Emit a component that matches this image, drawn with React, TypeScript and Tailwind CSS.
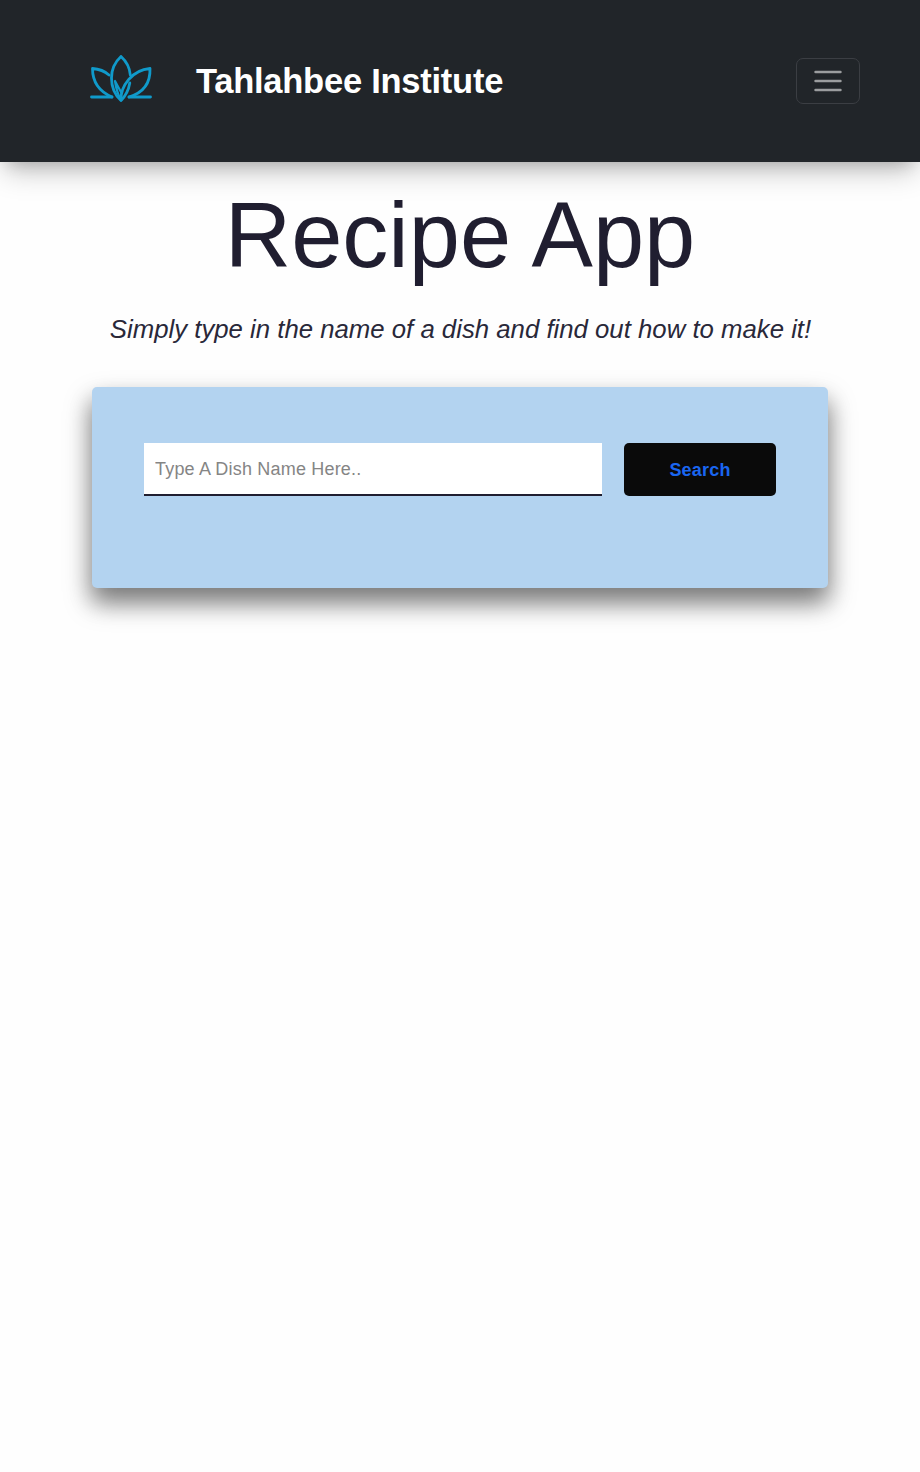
export default function App() {
  return (
    <div className="min-h-[1472px] bg-[#fefefe] font-['Liberation_Sans',Arial,sans-serif] text-[#201e30]">
      <header className="flex h-[162px] items-center bg-[#212529] pr-[60px] pl-[89px] shadow-[0_13px_27px_-5px_rgba(0,0,0,0.25),0_8px_16px_-8px_rgba(0,0,0,0.2)]">
        <svg viewBox="0 0 64 50" className="mt-[-6px] h-[50px] w-[64px]" fill="none" stroke="#109aca" strokeWidth="2.8" strokeLinejoin="round" strokeLinecap="round">
          <path d="M32 3.500C26 9 22.500 16.500 22.500 25C22.500 35 27 43 32 47.500C36 43.500 39.500 37.500 40.800 30M32 3.500C37.500 8.500 40.800 15 41.300 22" />
          <path d="M32 47C31.500 33 43 17 61 15.500C61.500 29 55 39.500 40 44" />
          <path d="M20 22C14.500 17 9 15.900 3.500 15.500C3.500 28 9 38 23 44" />
          <path d="M2.500 44H23M40 44H61.500" />
          <path d="M26 28C27 35 29 42 32 47M26 28L32.500 40" strokeWidth="2.2" />
        </svg>
        <h2 className="ml-[43px] -mt-px text-[34.5px] leading-[42px] font-bold tracking-[-0.25px] whitespace-nowrap text-white">Tahlahbee Institute</h2>
        <button aria-label="Menu" className="ml-auto flex h-[46px] w-[64px] items-center justify-center rounded-[7px] border border-[#3b3e43]">
          <svg viewBox="0 0 30 30" className="h-[34px] w-[34px]" stroke="#9b9d9f" strokeWidth="2.2" strokeLinecap="round">
            <path d="M4 7h22M4 15h22M4 23h22" />
          </svg>
        </button>
      </header>
      <main className="flex flex-col items-center">
        <h1 className="mt-[18px] text-[92px] leading-[110px] whitespace-nowrap">Recipe App</h1>
        <p className="mt-[23px] pl-px text-[25.76px] leading-[32px] whitespace-nowrap text-[#292839] italic">Simply type in the name of a dish and find out how to make it!</p>
        <section className="mt-[42px] flex h-[201px] w-[736px] items-start gap-[22px] rounded-[5px] bg-[#b3d3f0] px-[52px] pt-[56px] shadow-[0_14px_28px_rgba(0,0,0,0.35),0_14px_22px_rgba(0,0,0,0.28)]">
          <input type="text" placeholder="Type A Dish Name Here.." className="h-[53px] w-[458px] border-b-2 border-[#201e30] bg-white px-[11px] pt-px text-[18px] tracking-[0.19px] outline-none placeholder:text-[#858585]" />
          <button className="h-[53px] w-[152px] rounded-[5px] bg-[#0a0a0a] pt-px text-[18px] font-bold tracking-[0.2px] text-[#1a66f0]">Search</button>
        </section>
      </main>
    </div>
  );
}
